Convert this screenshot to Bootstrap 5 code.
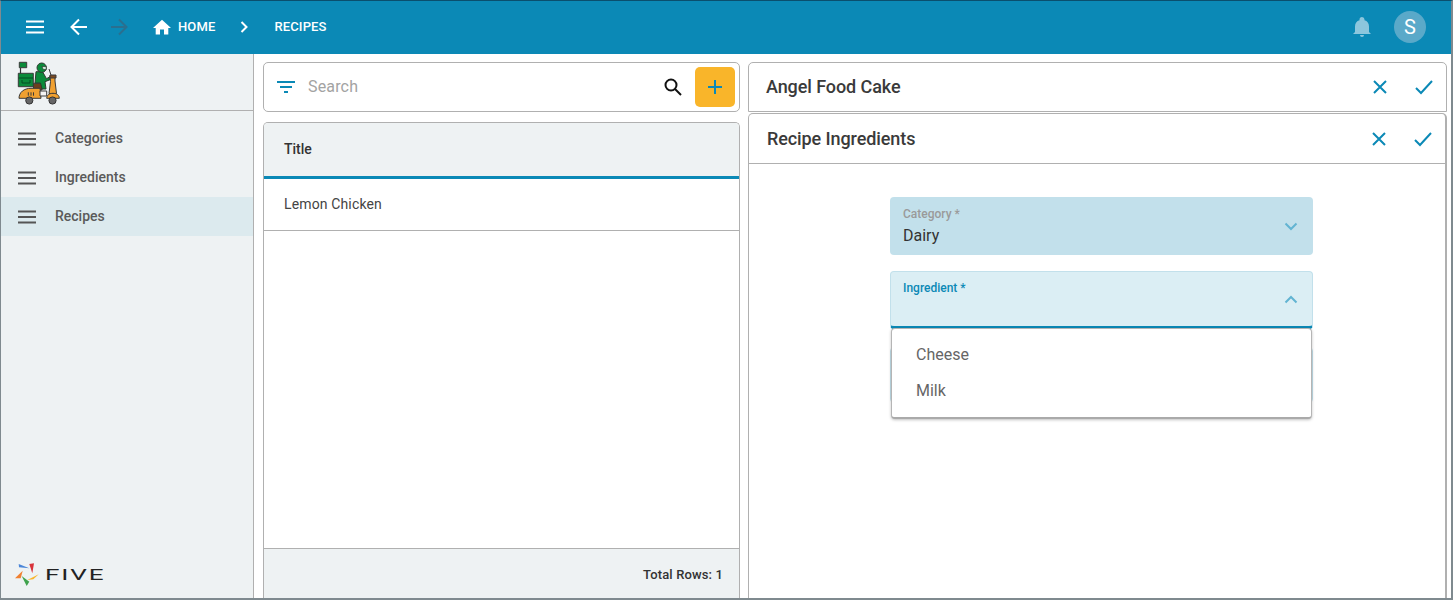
<!DOCTYPE html>
<html lang="en"><head><meta charset="utf-8"><title>Recipes</title>
<link rel="stylesheet" href="https://cdn.jsdelivr.net/npm/bootstrap@5.3.0/dist/css/bootstrap.min.css">
<style>
html,body{height:100%;overflow:hidden}
body{font-family:Roboto,"Liberation Sans",sans-serif;color:#333;background:#fff}
.app-frame{width:1453px;height:600px;border:1px solid #7f8a8f;border-top-color:#0a4f6e;border-right-width:2px;border-bottom-width:2px;display:flex;flex-direction:column;overflow:hidden}
.top-bar{height:53px;background:#0b89b6;color:#fff;flex:none;padding:0 0 2px 14px}
.top-btn{width:40px;height:40px;display:flex;align-items:center;justify-content:center}
.back-btn{margin-left:4px}
.home-link{margin-left:14px;gap:7px}
.crumb{font-size:13px;font-weight:500;letter-spacing:.01em}
.crumb-sep{margin:0 26px 0 25px}
.avatar-dot{width:32px;height:32px;border-radius:50%;background:#5aa9c9;font-size:20px;display:flex;align-items:center;justify-content:center;margin-left:23px;margin-right:25px}
.main-area{flex:1;min-height:0}
.side-col{width:253px;flex:none;background:#eef2f3;border-right:1px solid #b0b0b0}
.logo-row{height:57px;border-bottom:1px solid #b0b0b0;padding:6px 0 0 16px}
.side-item{height:39px;padding-left:16px;gap:18px;font-size:14px;font-weight:500;color:#5a5a5a}
.side-on{background:#dceaee}
.five-row{padding:0 0 11px 14px;gap:5px}
.five-text{font-family:Roboto,"Liberation Sans",sans-serif;font-weight:400;font-size:14px;letter-spacing:1px;color:#222;line-height:1;display:inline-block;transform:scaleX(1.86);transform-origin:left}
.list-col{width:477px;flex:none;margin-left:9px;padding-top:8px}
.box-line{border:1px solid #b0b0b0;border-radius:5px;background:#fff}
.search-box{height:50px;padding:0 4px 0 13px}
.search-word{font-size:16px;color:#a3a3a3;margin-left:13px;letter-spacing:.01em}
.add-tile{width:40px;height:40px;background:#f9b52a;border-radius:5px;display:flex;align-items:center;justify-content:center}
.grid-box{margin-top:10px;height:478px;border-bottom:0;border-radius:5px 5px 0 0;overflow:hidden}
.grid-head{height:56px;background:#eef2f3;border-bottom:3px solid #0b89b6;padding-left:20px;font-size:14px;font-weight:500}
.grid-row{height:52px;border-bottom:1px solid #b0b0b0;padding-left:20px;font-size:14px;color:#444;letter-spacing:.01em}
.grid-foot{height:52px;background:#eef2f3;border-top:1px solid #b0b0b0;padding:0 16px 0 0;font-size:13px;font-weight:500;color:#333;letter-spacing:.01em;flex:none}
.detail-col{flex:1;min-width:0;margin-left:8px;padding:8px 4px 0 0;position:relative}
.head-box{height:50px;padding:0 12px 0 17px;border-bottom-left-radius:0;border-bottom-right-radius:0}
.head-title{font-size:18px;font-weight:500;color:#3a3a3a;letter-spacing:-.005em}
.title-up{margin-bottom:2px}
.act-row{gap:26px}
.sub-panel{height:487px;margin-top:1px;border-radius:5px 5px 0 0;border-bottom:0;border-right-width:2px}
.sub-head{height:50px;padding:0 12px 0 18px;border-bottom:1px solid #b0b0b0}
.form-zone{padding:33px 0 0 141px;position:relative}
.fld{width:423px;border-radius:4px;padding:9px 13px 0;position:relative}
.fld-cat{height:58px;background:#c2e0eb}
.fld-ing{height:58px;margin-top:16px;background:#dbeef4;border:1px solid #c2e0eb;border-bottom:3px solid #0b89b6;padding:8px 12px 0}
.fld-next{height:56px;margin-top:18px;background:#fff;border:1px solid #c2e0eb}
.fld-label{font-size:12px;font-weight:500;color:#9a9a9a;line-height:16px}
.fld-ing .fld-label{color:#0b89b6}
.fld-value{font-size:16px;color:#333;line-height:22px;margin-top:3px}
.fld-chev{position:absolute;right:15px;top:25px}
.fld-ing .fld-chev{right:14px;top:23px}
.pick-menu{position:absolute;left:142px;top:164px;width:421px;height:91px;background:#fff;border:1px solid #b5b5b5;border-bottom:2px solid #aaa;border-radius:4px;box-shadow:0 1px 3px rgba(0,0,0,.25);padding:8px 0;z-index:5}
.pick-item{height:36px;padding-left:24px;font-size:16px;color:#666;display:flex;align-items:center}
</style></head>
<body>
<div class="app-frame">
<header class="top-bar d-flex align-items-center">
 <div class="top-btn"><svg width="20" height="14" viewBox="0 0 20 14"><path d="M1 1.500h18M1 7h18M1 12.500h18" stroke="#fff" stroke-width="2"/></svg></div>
 <div class="top-btn back-btn"><svg width="18" height="18" viewBox="0 0 18 18" fill="none" stroke="#fff" stroke-width="2"><path d="M17 9H2M9 1.500 1.500 9 9 16.500"/></svg></div>
 <div class="top-btn"><svg width="18" height="18" viewBox="0 0 18 18" fill="none" stroke="#2a6f8f" stroke-width="2"><path d="M1 9h15M9 1.500 16.500 9 9 16.500"/></svg></div>
 <div class="home-link d-flex align-items-center"><svg width="18" height="16" viewBox="0 0 18 16"><path d="M7 15.500v-5h4v5h4.300V9H18L9 .8 0 9h2.700v6.500z" fill="#fff"/></svg><span class="crumb">HOME</span></div>
 <svg class="crumb-sep" width="8" height="12" viewBox="0 0 8 12" fill="none" stroke="#fff" stroke-width="2"><path d="M1.500 1 6.500 6l-5 5"/></svg>
 <span class="crumb">RECIPES</span>
 <div class="ms-auto d-flex align-items-center">
  <svg width="18" height="20" viewBox="0 0 18 20"><path d="M9 20a2 2 0 0 0 2-2H7a2 2 0 0 0 2 2zm7-5v-5.500c0-3.100-1.700-5.700-4.500-6.300V2.500a2.500 2.500 0 0 0-5 0v.7C3.700 3.800 2 6.400 2 9.500V15l-2 2h18z" fill="#8cc6dd"/></svg>
  <div class="avatar-dot">S</div>
 </div>
</header>
<div class="main-area d-flex">
 <aside class="side-col d-flex flex-column">
  <div class="logo-row"><svg width="44" height="46" viewBox="0 0 44 46" stroke-linejoin="round">
   <path d="M3.500 8v6" stroke="#333" stroke-width="1.200"/>
   <rect x="2.300" y="2.300" width="7.400" height="5.400" fill="#0b8a3a" stroke="#3a3a3a"/>
   <rect x="1.300" y="13.300" width="15" height="13.400" fill="#0b8a3a" stroke="#3a3a3a"/>
   <path d="M1.500 18h14.500M5 20v3h8v-3" stroke="#054d22" fill="none"/>
   <rect x="16.500" y="23.300" width="8.500" height="6.700" fill="#6b3f1d" stroke="#3a3a3a"/>
   <path d="M2 38.300c0-6 5-10 12-10h9l1 10z" fill="#f0a030" stroke="#3a3a3a"/>
   <path d="M11.300 32.300v3.400M14 32.300v3.400M16.500 32.300v3.400" stroke="#3a3a3a"/>
   <path d="M19 11.700h6.500l4 7 3.500-2v3l-5 2 1 7.300h-4l-1.500-6H18z" fill="#0b8a3a" stroke="#2f3a30"/>
   <circle cx="24.700" cy="7.700" r="4.700" fill="#0b8a3a" stroke="#2f3a30"/>
   <path d="M25 6.500h4.200v3h-3z" fill="#cfe9d8" stroke="#2f3a30" stroke-width=".7"/>
   <path d="M23 31h6.700v5H23z" fill="#f4f4f4" stroke="#3a3a3a"/>
   <path d="M33 15.500h5v5.500l1.500 12.500h-7.500l1.500-12z" fill="#f0a030" stroke="#3a3a3a"/>
   <path d="M32 9l2 6M33 15h6v3h-6z" stroke="#3a3a3a" fill="#7b4a22"/>
   <path d="M29.700 38.300c0-3 2.500-5 6.300-5s6.300 2 6.300 5z" fill="#f0a030" stroke="#3a3a3a"/>
   <circle cx="12.300" cy="40.500" r="3.600" fill="#666" stroke="#333"/><circle cx="35.500" cy="40.500" r="3.600" fill="#666" stroke="#333"/>
  </svg></div>
  <div class="pt-2">
   <div class="side-item d-flex align-items-center"><svg width="20" height="14" viewBox="0 0 20 14"><path d="M1 1.500h18M1 7h18M1 12.500h18" stroke="#555" stroke-width="2"/></svg>Categories</div>
   <div class="side-item d-flex align-items-center"><svg width="20" height="14" viewBox="0 0 20 14"><path d="M1 1.500h18M1 7h18M1 12.500h18" stroke="#555" stroke-width="2"/></svg>Ingredients</div>
   <div class="side-item side-on d-flex align-items-center"><svg width="20" height="14" viewBox="0 0 20 14"><path d="M1 1.500h18M1 7h18M1 12.500h18" stroke="#555" stroke-width="2"/></svg>Recipes</div>
  </div>
  <div class="five-row mt-auto d-flex align-items-center">
   <svg width="25" height="24" viewBox="0 0 25 24"><path d="M3.700 1l10.600 4.300L4 4.300z" fill="#4a86d8"/><path d="M14.300 1 19 .3l-1.700 10z" fill="#d8333a"/><path d="M23.700 11.300 12.300 17l6-.7z" fill="#f9b52a"/><path d="M6.700 13l7.600 5.700L11.700 23z" fill="#3fa34d"/><path d="M0 15.300 7.700 7.700l-2 7.600z" fill="#f08030"/></svg>
   <span class="five-text">FIVE</span>
  </div>
 </aside>
 <section class="list-col">
  <div class="box-line search-box d-flex align-items-center">
   <svg width="18" height="12" viewBox="0 0 18 12"><path d="M0 1h18M3 6h12M7 11h4" stroke="#0b89b6" stroke-width="2"/></svg>
   <span class="search-word flex-grow-1">Search</span>
   <svg class="me-2" width="20" height="20" viewBox="0 0 20 20" fill="none" stroke="#111" stroke-width="2"><circle cx="8" cy="8" r="5.500"/><path d="M12 12l6 6"/></svg>
   <div class="add-tile ms-1"><svg width="16" height="16" viewBox="0 0 16 16"><path d="M8 1v14M1 8h14" stroke="#0b89b6" stroke-width="2"/></svg></div>
  </div>
  <div class="box-line grid-box d-flex flex-column">
   <div class="grid-head d-flex align-items-center">Title</div>
   <div class="grid-row d-flex align-items-center">Lemon Chicken</div>
   <div class="grid-foot mt-auto d-flex align-items-center justify-content-end">Total Rows: 1</div>
  </div>
 </section>
 <section class="detail-col">
  <div class="box-line head-box d-flex align-items-center justify-content-between">
   <span class="head-title title-up">Angel Food Cake</span>
   <div class="d-flex align-items-center act-row">
    <svg width="16" height="16" viewBox="0 0 16 16"><path d="M2 2l12 12M14 2 2 14" stroke="#0b89b6" stroke-width="2"/></svg>
    <svg width="20" height="16" viewBox="0 0 20 16" fill="none"><path d="M2 9l5 5L18 2" stroke="#0b89b6" stroke-width="2"/></svg>
   </div>
  </div>
  <div class="box-line sub-panel">
   <div class="sub-head d-flex align-items-center justify-content-between">
    <span class="head-title">Recipe Ingredients</span>
    <div class="d-flex align-items-center act-row">
     <svg width="16" height="16" viewBox="0 0 16 16"><path d="M2 2l12 12M14 2 2 14" stroke="#0b89b6" stroke-width="2"/></svg>
     <svg width="20" height="16" viewBox="0 0 20 16" fill="none"><path d="M2 9l5 5L18 2" stroke="#0b89b6" stroke-width="2"/></svg>
    </div>
   </div>
   <div class="form-zone">
    <div class="fld fld-cat"><div class="fld-label">Category *</div><div class="fld-value">Dairy</div>
     <svg class="fld-chev" width="14" height="9" viewBox="0 0 14 9" fill="none"><path d="M1.500 1.500 7 7l5.500-5.500" stroke="#62b4d2" stroke-width="2"/></svg></div>
    <div class="fld fld-ing"><div class="fld-label">Ingredient *</div>
     <svg class="fld-chev" width="14" height="9" viewBox="0 0 14 9" fill="none"><path d="M1.500 7.500 7 2l5.500 5.500" stroke="#62b4d2" stroke-width="2"/></svg></div>
    <div class="fld fld-next"></div>
    <div class="pick-menu"><div class="pick-item">Cheese</div><div class="pick-item">Milk</div></div>
   </div>
  </div>
 </section>
</div>
</div>
<script src="https://cdn.jsdelivr.net/npm/bootstrap@5.3.0/dist/js/bootstrap.bundle.min.js"></script>
</body></html>
